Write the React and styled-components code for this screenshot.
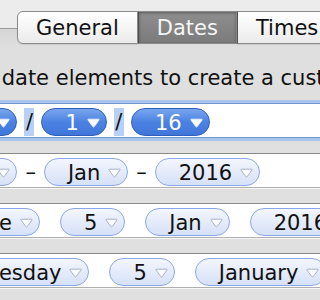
import styled, { createGlobalStyle } from 'styled-components'

const GlobalStyle = createGlobalStyle`
  body {
    margin: 0;
    background: #e0e0e0;
    font-family: "DejaVu Sans", "Liberation Sans", sans-serif;
  }
`

const Window = styled.div`
  width: 320px;
  height: 300px;
  overflow: hidden;
  background: linear-gradient(
    #ececec 0px,
    #ebebeb 28px,
    #d6d6d6 29px,
    #dfdfdf 48px,
    #e0e0e0 100%
  );
`

const TabStrip = styled.div`
  display: flex;
  align-items: center;
  padding-top: 11px;
`

const TabLine = styled.div`
  width: 17px;
  height: 1px;
  margin-top: 1px;
  background: #9c9c9c;
  flex: none;
`

const Tab = styled.div`
  flex: none;
  height: 33px;
  box-sizing: border-box;
  padding: 1px 18px 0;
  line-height: 30px;
  font-size: 21px;
  color: ${p => (p.$active ? '#f6f6f6' : '#111')};
  background: ${p =>
    p.$active
      ? 'linear-gradient(#8e8e8e, #7b7b7b)'
      : 'linear-gradient(#ffffff, #f3f3f3 60%, #ebebeb)'};
  border: 1px solid #8a8a8a;
  border-left: ${p => (p.$first ? '1px solid #8a8a8a' : '1px solid #4e4e4e')};
  border-radius: ${p => (p.$first ? '6px 0 0 6px' : '0')};
  box-shadow: ${p =>
    p.$active ? 'inset 0 1px 3px rgba(0,0,0,0.35)' : '0 1px 1px rgba(0,0,0,0.08)'};
`

const Hint = styled.p`
  margin: 22px 0 12px -56px;
  font-size: 21px;
  line-height: 25px;
  color: #111;
  white-space: nowrap;
`

const Rows = styled.div`
  display: flex;
  flex-direction: column;
  gap: 15px;
  margin-left: -54px;
`

const Field = styled.div`
  display: flex;
  align-items: flex-start;
  gap: ${p => p.$gap}px;
  width: 520px;
  height: 35px;
  box-sizing: border-box;
  padding: 4px 5px 0;
  background: #fff;
  border: 1px solid ${p => (p.$focus ? '#6f98d8' : '#b0b0b0')};
  border-top-color: ${p => (p.$focus ? '#6f98d8' : '#8a8a8a')};
  box-shadow: ${p =>
    p.$focus ? '0 0 0 3px #a9c5ec' : '0 1px 0 rgba(255,255,255,0.7)'};
`

const Pill = styled.div`
  flex: none;
  display: flex;
  align-items: flex-start;
  height: 28px;
  box-sizing: border-box;
  padding: 3px 6px 0 23px;
  border-radius: 14px;
  font-size: 21px;
  line-height: 23px;
  color: ${p => (p.$selected ? '#fff' : '#111')};
  background: ${p =>
    p.$selected
      ? 'linear-gradient(#79a6ee, #4b82e2 50%, #3f76da)'
      : 'linear-gradient(#f3f6fd, #e3eafa 55%, #d6e1f7)'};
  border: 1px solid ${p => (p.$selected ? '#2f5fbd' : '#8aa6ea')};
`

const Arrow = styled.svg`
  flex: none;
  width: 13px;
  height: 10px;
  margin: 6px 0 0 8px;
`

const Sep = styled.span`
  flex: none;
  height: 28px;
  padding: 0 ${p => (p.$hl ? 1.5 : 0)}px;
  font-size: 21px;
  line-height: 28px;
  color: #111;
  background: ${p => (p.$hl ? '#b7d1f6' : 'transparent')};
`

const Caret = ({ selected }) => (
  <Arrow viewBox="0 0 13 10">
    <path
      d="M1.4 1.2 H11.6 Q12.5 1.2 12 2 L7.2 8.6 Q6.5 9.4 5.8 8.6 L1 2 Q0.5 1.2 1.4 1.2 Z"
      fill={selected ? '#ffffff' : '#fafbfd'}
      stroke={selected ? '#e8f0ff' : '#a9b3c6'}
      strokeWidth="1"
    />
  </Arrow>
)

const Token = ({ children, selected }) => (
  <Pill $selected={selected}>
    <span>{children}</span>
    <Caret selected={selected} />
  </Pill>
)

const App = () => (
  <>
    <GlobalStyle />
    <Window>
      <TabStrip>
        <TabLine />
        <Tab $first>General</Tab>
        <Tab $active>Dates</Tab>
        <Tab>Times</Tab>
      </TabStrip>
      <Hint>Drag date elements to create a custom format:</Hint>
      <Rows>
        <Field $focus $gap={7}>
          <Token selected>5</Token>
          <Sep $hl>/</Sep>
          <Token selected>1</Token>
          <Sep $hl>/</Sep>
          <Token selected>16</Token>
        </Field>
        <Field $gap={8}>
          <Token>5</Token>
          <Sep>–</Sep>
          <Token>Jan</Token>
          <Sep>–</Sep>
          <Token>2016</Token>
        </Field>
        <Field $gap={20}>
          <Token>Tue</Token>
          <Token>5</Token>
          <Token>Jan</Token>
          <Token>2016</Token>
        </Field>
        <Field $gap={20}>
          <Token>Tuesday</Token>
          <Token>5</Token>
          <Token>January</Token>
          <Token>2016</Token>
        </Field>
      </Rows>
    </Window>
  </>
)

export default App
